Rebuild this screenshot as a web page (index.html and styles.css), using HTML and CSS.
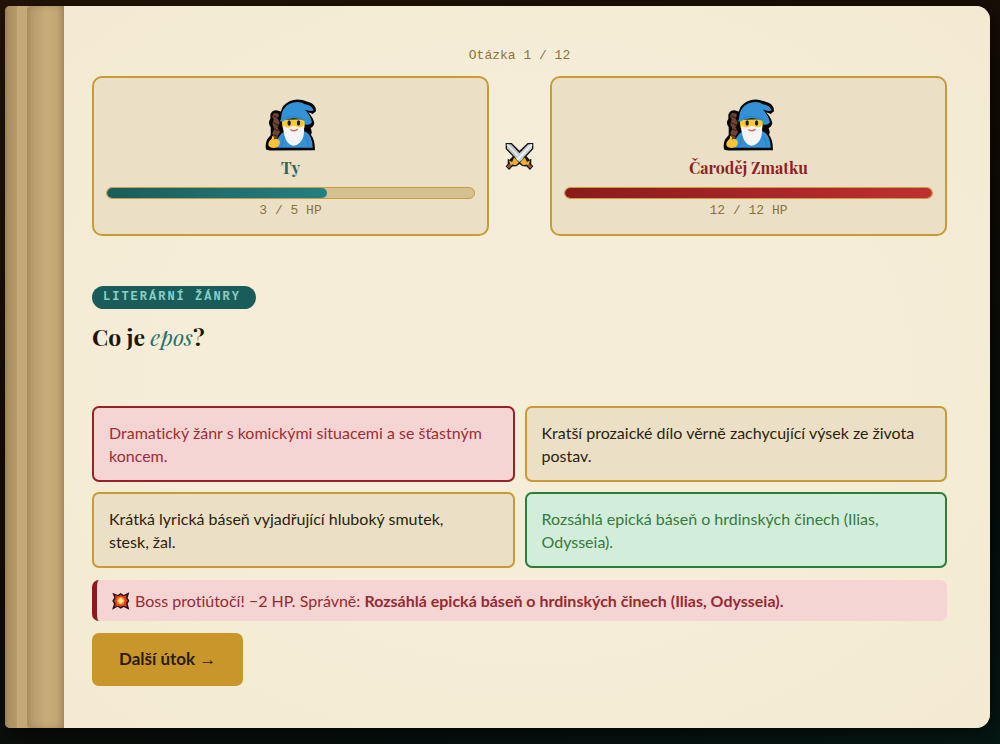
FILE: index.html
```
<!DOCTYPE html>
<html lang="cs">
<head>
    <meta charset="utf-8">
    <meta name="viewport" content="width=device-width, initial-scale=1.0">
    <title>Čaroděj Zmatku</title>
    <link rel="stylesheet" href="styles.css">
</head>
<body>
    <svg class="sprites" aria-hidden="true">
        <symbol id="wizard" viewBox="72 42 152 154">
            <path d="M76 193 Q71 180 78 162 L89 149 L89 126 Q79 112 88 100 L88 88 Q92 75 106 75 L119 79 Q124 58 145 48 Q170 37 199 50 Q224 55 224 78 L214 86 L201 81 Q216 98 219 113 Q217 125 208 128 Q214 142 209 148 Q221 162 221 194 L87 195 Z" fill="#050505"/>
            <path d="M99 83 L111 85 Q116 91 109 98 L116 112 L109 126 L117 140 L109 153 L113 184 L96 184 L98 156 L94 143 L100 131 L94 116 L98 102 L93 94 Z" fill="#704230"/>
            <path d="M98 92 L111 99 M96 112 L111 119 M98 130 L112 136 M99 149 L112 154" fill="none" stroke="#2d2020" stroke-width="3"/>
            <path d="M105 187 Q107 152 127 140 L192 138 Q214 149 214 187 Z" fill="#3591d5"/>
            <path d="M123 103 Q121 128 132 144 L183 144 Q193 125 191 102 Z" fill="#fac936"/>
            <path d="M127 119 Q126 155 141 173 Q157 188 175 173 Q192 157 188 119 Q179 130 169 124 Q157 120 146 125 Q135 130 127 119 Z" fill="#f5f5f6"/>
            <path d="M119 104 Q121 67 145 56 Q171 44 191 57 Q212 60 217 76 Q205 79 191 73 Q207 90 212 111 Q204 122 190 117 L190 107 Q157 91 124 108 Q119 110 116 106 Z" fill="#3591d5"/>
            <path d="M123 101 Q156 85 189 103" fill="none" stroke="#2578b7" stroke-width="2"/>
            <path d="M128 152 L121 184 M191 151 Q200 164 202 184" fill="none" stroke="#2475b4" stroke-width="2"/>
            <ellipse cx="144" cy="113" rx="5" ry="8" fill="#241b18"/>
            <ellipse cx="172" cy="113" rx="5" ry="8" fill="#241b18"/>
            <path d="M149 133 Q158 140 168 132" fill="none" stroke="#e8604a" stroke-width="4" stroke-linecap="round"/>
            <path d="M82 179 Q81 168 92 160 L94 151 Q101 154 98 162 Q114 158 116 170 Q117 184 103 187 Q87 189 82 179 Z" fill="#fac43a"/>
        </symbol>
        <symbol id="swords" viewBox="60 36 86 86">
            <path d="M62 39 H80 L103 62 L127 39 H144 V57 L124 78 L133 89 L138 86 V101 L144 108 L134 119 L124 109 L112 108 L103 101 L94 108 L82 109 L72 119 L62 108 L68 101 V86 L73 89 L83 78 L62 57 Z" fill="#151515"/>
            <path d="M66 43 H78 L116 83 L104 95 L66 55 Z" fill="#bfc5c9"/>
            <path d="M66 43 L110 89" stroke="#e9edf0" stroke-width="5"/>
            <path d="M140 43 H129 L90 83 L102 95 L140 55 Z" fill="#cbd0d4"/>
            <path d="M140 43 L96 89" stroke="#f3f4f5" stroke-width="5"/>
            <path d="M72 91 L81 95 L87 82 L101 97 L92 105 L81 103 L72 113 L66 108 L75 101 Z" fill="#f3ae2c"/>
            <path d="M134 91 L125 95 L119 82 L105 97 L114 105 L125 103 L134 113 L140 108 L131 101 Z" fill="#f3ae2c"/>
            <path d="M66 108 L75 101 L79 105 L72 113 Z M140 108 L131 101 L127 105 L134 113 Z" fill="#8a4e2c"/>
        </symbol>
        <symbol id="boom" viewBox="82 66 54 54">
            <path d="M83 68 L99 75 L108 69 L117 75 L134 67 L129 83 L134 92 L129 101 L134 119 L117 111 L108 116 L99 110 L82 119 L88 102 L83 92 L89 83 Z" fill="#251512"/>
            <path d="M91 76 L101 79 L108 74 L115 79 L126 76 L124 85 L129 92 L124 100 L126 110 L115 107 L108 111 L101 107 L91 111 L93 101 L88 92 L93 85 Z" fill="#e43b21"/>
            <path d="M99 83 L108 80 L117 83 L120 92 L117 102 L108 105 L99 102 L96 92 Z" fill="#f98b22"/>
            <path d="M108 83 L113 88 L118 92 L113 97 L108 102 L103 97 L98 92 L103 88 Z" fill="#ffec8b"/>
        </symbol>
    </svg>

    <div class="book">
        <div class="page-edge"></div>
        <div class="page-edge light"></div>
        <div class="spine"></div>

        <main class="page">
            <div class="counter">Otázka 1 / 12</div>

            <div class="arena">
                <section class="fighter player">
                    <svg class="avatar" aria-hidden="true"><use href="#wizard"/></svg>
                    <h2 class="name">Ty</h2>
                    <div class="hp-bar"><div class="hp-fill" style="width: 60%"></div></div>
                    <div class="hp-text">3 / 5 HP</div>
                </section>
                <svg class="versus" aria-hidden="true"><use href="#swords"/></svg>
                <section class="fighter boss">
                    <svg class="avatar" aria-hidden="true"><use href="#wizard"/></svg>
                    <h2 class="name">Čaroděj Zmatku</h2>
                    <div class="hp-bar"><div class="hp-fill" style="width: 100%"></div></div>
                    <div class="hp-text">12 / 12 HP</div>
                </section>
            </div>

            <div class="question">
                <span class="tag">Literární žánry</span>
                <h1>Co je <em>epos</em>?</h1>
            </div>

            <div class="options">
                <button type="button" class="option wrong">Dramatický žánr s komickými situacemi a se šťastným koncem.</button>
                <button type="button" class="option">Kratší prozaické dílo věrně zachycující výsek ze života postav.</button>
                <button type="button" class="option">Krátká lyrická báseň vyjadřující hluboký smutek, stesk,&nbsp;žal.</button>
                <button type="button" class="option correct">Rozsáhlá epická báseň o hrdinských činech (Ilias, Odysseia).</button>
            </div>

            <div class="feedback" role="status">
                <svg class="boom" aria-hidden="true"><use href="#boom"/></svg>
                <span>Boss protiútočí! −2 HP. Správně: <strong>Rozsáhlá epická báseň o hrdinských činech (Ilias, Odysseia).</strong></span>
            </div>

            <button type="button" class="next">Další útok <span class="arrow">→</span></button>
        </main>
    </div>
</body>
</html>
```
FILE: styles.css
```
* {
    box-sizing: border-box;
}

body {
    margin: 0;
    padding: 6px 10px 16px 5px;
    min-height: 100vh;
    display: flex;
    background: linear-gradient(160deg, #241406 0%, #130c05 45%, #06100e 80%, #061914 100%);
    font-family: Lato, "Liberation Sans", sans-serif;
    font-variant-ligatures: none;
    color: #2c1e0d;
}

.sprites {
    display: none;
}

.book {
    flex: 1;
    display: flex;
    border-radius: 5px 14px 14px 5px;
    overflow: hidden;
    background: #b99c6c;
    box-shadow: 4px 6px 20px rgba(0, 0, 0, 0.6);
}

.page-edge {
    width: 12px;
    background: linear-gradient(90deg, #99814f 0, #ab8f60 30%, #b79967 100%);
}

.page-edge.light {
    width: 10px;
    background: #c4a878;
}

.spine {
    width: 37px;
    border-radius: 5px 0 0 5px;
    background: linear-gradient(90deg, #b4956a 0%, #c8ac79 50%, #c4a776 80%, #ac9469 100%);
    box-shadow: inset 0 0 6px rgba(100, 75, 35, 0.3);
}

.page {
    flex: 1;
    min-width: 0;
    padding: 40px 43px 42px 28px;
    background: radial-gradient(ellipse at center, #f5edd8 50%, #f4ead2 100%);
}

.counter,
.hp-text {
    font-family: "Liberation Mono", monospace;
    font-size: 13px;
    line-height: 20px;
    text-align: center;
    color: #8b7340;
}

.arena {
    display: grid;
    grid-template-columns: 1fr 29px 1fr;
    align-items: center;
    gap: 16px;
    margin-top: 10px;
}

.fighter {
    padding: 21px 12px 13px;
    background: #ebe0c5;
    border: 2px solid #c89b34;
    border-radius: 10px;
    text-align: center;
}

.avatar {
    display: block;
    width: 51px;
    height: 52px;
    margin: 0 auto;
}

.versus {
    width: 29px;
    height: 29px;
}

.name {
    margin: 5px 0 7px;
    font-family: "Playfair Display", "Liberation Serif", serif;
    font-size: 16px;
    line-height: 24px;
}

.player .name {
    color: #27665f;
}

.boss .name {
    color: #8f2026;
}

.hp-bar {
    height: 12px;
    background: #d5c18f;
    border: 1px solid #c89b45;
    border-radius: 6px;
    overflow: hidden;
}

.hp-fill {
    height: 100%;
    border-radius: 5px;
}

.player .hp-fill {
    background: linear-gradient(90deg, #1a5c5a, #248080);
}

.boss .hp-fill {
    background: linear-gradient(90deg, #8b1a1a, #c03030);
}

.hp-text {
    margin-top: 2px;
}

.question {
    margin: 50px 0 52px;
}

.tag {
    display: inline-block;
    padding: 0 15px 0 11px;
    background: #1a5c5a;
    border-radius: 12px;
    font-family: "Liberation Mono", monospace;
    font-size: 12px;
    font-weight: bold;
    line-height: 23px;
    letter-spacing: 2px;
    text-transform: uppercase;
    color: #89cfc6;
    vertical-align: top;
}

h1 {
    margin: 11px 0 0;
    font-family: "Playfair Display", "Liberation Serif", serif;
    font-size: 23px;
    line-height: 34px;
    color: #1e1409;
}

h1 em {
    font-weight: normal;
    color: #27706a;
}

.options {
    display: grid;
    grid-template-columns: 1fr 1fr;
    gap: 10px;
}

.option {
    padding: 13px 15px;
    background: #ebe0c5;
    border: 2px solid #c89b34;
    border-radius: 7px;
    font-family: inherit;
    font-variant-ligatures: inherit;
    font-size: 16px;
    line-height: 23px;
    text-align: left;
    color: #2c1e0d;
    cursor: pointer;
}

.option.wrong {
    background: #f5d5d3;
    border-color: #982027;
    color: #a02c35;
}

.option.correct {
    background: #d2edda;
    border-color: #2e7d39;
    color: #367a3e;
}

.feedback {
    display: flex;
    align-items: center;
    gap: 5px;
    margin-top: 12px;
    padding: 9px 15px;
    background: #f5d5d3;
    border-left: 5px solid #8b1a1f;
    border-radius: 7px;
    font-size: 16px;
    line-height: 23px;
    color: #982a32;
}

.boom {
    flex: none;
    width: 18px;
    height: 18px;
}

.next {
    margin-top: 12px;
    padding: 14px 27px;
    background: #c8962a;
    border: 0;
    border-radius: 7px;
    font-family: inherit;
    font-size: 17px;
    font-weight: bold;
    line-height: 24px;
    color: #2a1c06;
    cursor: pointer;
}

.arrow {
    font-family: "Liberation Serif", serif;
    font-weight: normal;
}
```
